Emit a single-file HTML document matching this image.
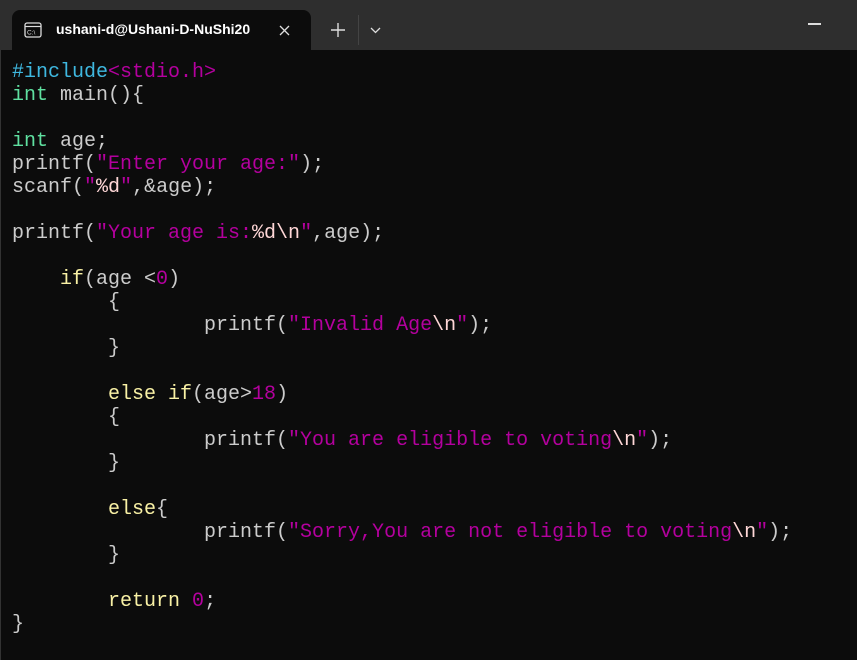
<!DOCTYPE html>
<html><head><meta charset="utf-8"><style>
*{margin:0;padding:0;box-sizing:border-box}
html,body{width:857px;height:660px;overflow:hidden;background:#0c0c0c}
.bar{position:absolute;left:0;top:0;width:857px;height:50px;background:#2e2e2e}
.tab{position:absolute;left:12px;top:10px;width:299px;height:40px;background:#0c0c0c;border-radius:8px 8px 0 0}
.tab .t{position:absolute;left:44px;top:11px;font:600 14px "Liberation Sans",sans-serif;color:#fff;white-space:nowrap;width:206px;overflow:hidden}
.code{position:absolute;left:12px;top:61px;font:20px/23px "Liberation Mono",monospace;color:#cccccc;white-space:pre}
.k{color:#f9f1a5}.g{color:#5fe0a0}.c{color:#3fb8e0}.m{color:#b4009e}.p{color:#ffd7d7}
.lb{position:absolute;left:0;top:50px;width:1px;height:610px;background:#333}
</style></head><body>
<div class="bar"></div>
<div class="tab">
<svg style="position:absolute;left:12px;top:12px" width="18" height="16" viewBox="0 0 18 16"><rect x="1" y="1" width="16" height="14" rx="2" fill="none" stroke="#ddd" stroke-width="1.3"/><line x1="1" y1="4.5" x2="17" y2="4.5" stroke="#ddd" stroke-width="1.2"/><text x="3" y="12.5" font-size="6.5" font-family="Liberation Sans" fill="#ddd">C:\</text></svg>
<div class="t">ushani-d@Ushani-D-NuShi20</div>
<svg style="position:absolute;left:267px;top:15px" width="11" height="11"><path d="M1 1L10 10M10 1L1 10" stroke="#ddd" stroke-width="1.3"/></svg>
</div>
<svg style="position:absolute;left:331px;top:23px" width="14" height="14"><path d="M7 0V14M0 7H14" stroke="#ddd" stroke-width="1.4"/></svg>
<div style="position:absolute;left:358px;top:15px;width:1px;height:30px;background:#444"></div>
<svg style="position:absolute;left:370px;top:27px" width="11" height="7"><path d="M1 1L5.5 5.5L10 1" stroke="#ddd" stroke-width="1.3" fill="none"/></svg>
<div style="position:absolute;left:808px;top:23px;width:13px;height:1.5px;background:#ddd"></div>
<div class="lb"></div>
<div class="code"><span class="c">#include</span><span class="m">&lt;stdio.h&gt;</span>
<span class="g">int</span> main(){

<span class="g">int</span> age;
printf(<span class="m">"Enter your age:"</span>);
scanf(<span class="m">"</span><span class="p">%d</span><span class="m">"</span>,&amp;age);

printf(<span class="m">"Your age is:</span><span class="p">%d\n</span><span class="m">"</span>,age);

    <span class="k">if</span>(age &lt;<span class="m">0</span>)
        {
                printf(<span class="m">"Invalid Age</span><span class="p">\n</span><span class="m">"</span>);
        }

        <span class="k">else if</span>(age&gt;<span class="m">18</span>)
        {
                printf(<span class="m">"You are eligible to voting</span><span class="p">\n</span><span class="m">"</span>);
        }

        <span class="k">else</span>{
                printf(<span class="m">"Sorry,You are not eligible to voting</span><span class="p">\n</span><span class="m">"</span>);
        }

        <span class="k">return</span> <span class="m">0</span>;
}</div>
</body></html>
